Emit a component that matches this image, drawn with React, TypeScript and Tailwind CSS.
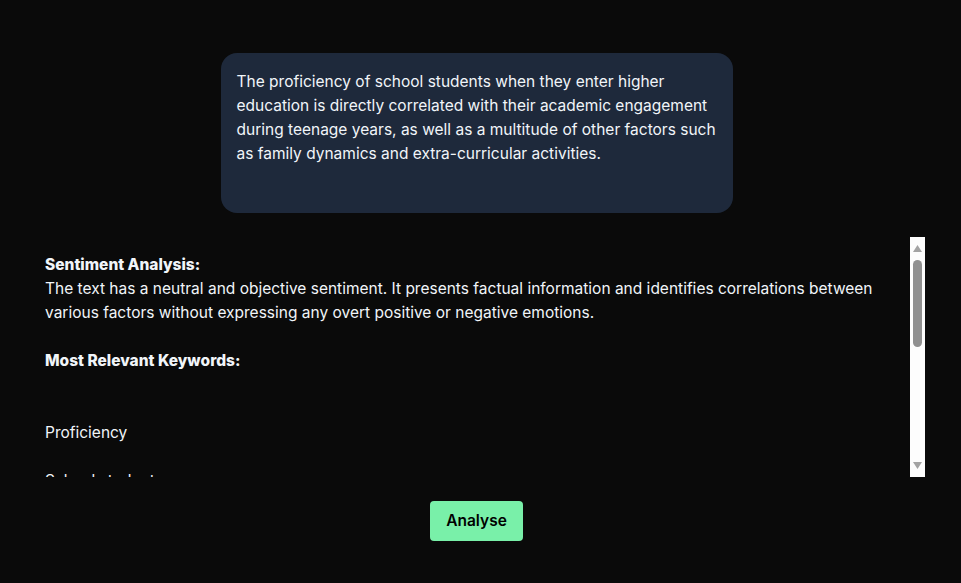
export default function App() {
  const lines: { text: string; bold?: boolean }[] = [
    { text: 'Sentiment Analysis:', bold: true },
    {
      text: 'The text has a neutral and objective sentiment. It presents factual information and identifies correlations between',
    },
    { text: 'various factors without expressing any overt positive or negative emotions.' },
    { text: '' },
    { text: 'Most Relevant Keywords:', bold: true },
    { text: '' },
    { text: '' },
    { text: 'Proficiency' },
    { text: '' },
    { text: 'School students' },
  ];

  return (
    <div
      className="min-h-[583px] bg-[#0a0a0a] text-[#f1f5f9] flex flex-col items-center pt-[53px] pr-2"
      style={{ fontFamily: 'Inter, "Liberation Sans", sans-serif' }}
    >
      <div className="w-[512px] h-[160px] rounded-2xl bg-[#1e293b] px-4 pt-[17px] text-[15.5px] leading-6">
        The proficiency of school students when they enter higher education is directly correlated with
        their academic engagement during teenage years, as well as a multitude of other factors such as
        family dynamics and extra-curricular activities.
      </div>

      <div className="mt-6 w-full pl-[45px] pr-[28px]">
        <div className="flex h-[240px]">
          <div className="flex-1 overflow-hidden pt-4 text-[15.5px] leading-6">
            {lines.map((l, i) => (
              <div key={i} className={l.bold ? 'font-extrabold h-6' : 'h-6'}>
                {l.text}
              </div>
            ))}
          </div>
          <div className="w-[15px] bg-[#fdfdfd] flex flex-col items-center py-2">
            <svg width="9" height="7" viewBox="0 0 9 7">
              <path d="M4.5 0L9 7H0z" fill="#a3a3a3" />
            </svg>
            <div className="mt-2 w-[9px] h-[87px] rounded-full bg-[#909090]" />
            <div className="flex-1" />
            <svg width="9" height="7" viewBox="0 0 9 7">
              <path d="M0 0h9L4.5 7z" fill="#a3a3a3" />
            </svg>
          </div>
        </div>
      </div>

      <button className="mt-6 h-10 w-[93px] rounded bg-[#79f0a9] text-[15.5px] font-semibold text-black">
        Analyse
      </button>
    </div>
  );
}
